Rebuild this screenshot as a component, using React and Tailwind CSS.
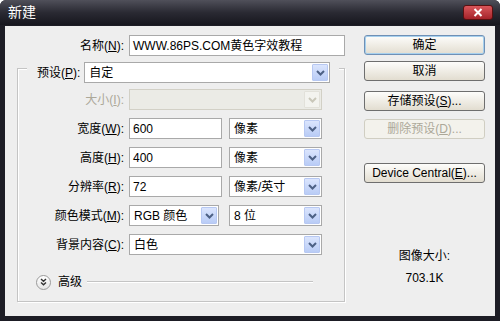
const FONT = { fontFamily: '"Liberation Sans", "Noto Sans CJK SC", sans-serif' }

function U({ children }) {
  return <span className="underline underline-offset-[1px]">{children}</span>
}

function Chevron({ disabled }) {
  return (
    <svg width="9" height="6" viewBox="0 0 9 6">
      <path
        d="M1 1 L4.5 4.5 L8 1"
        fill="none"
        stroke={disabled ? '#c9c7ba' : '#4d6185'}
        strokeWidth="2"
      />
    </svg>
  )
}

function Select({ className, value, disabled }) {
  return (
    <div
      className={`flex h-[21px] items-center border ${
        disabled ? 'border-[#d2d0c6] bg-[#ebebe6]' : 'border-[#a9a9a9] bg-white'
      } ${className}`}
    >
      <span className="flex-1 pl-[4px] text-[12px] leading-none">{value}</span>
      <div
        className={`mr-[1px] flex h-[17px] w-[16px] items-center justify-center rounded-[1px] border ${
          disabled
            ? 'border-[#e2e1da] bg-[#f3f3ef]'
            : 'border-[#b7c8f2] bg-gradient-to-b from-[#dbe5fd] to-[#b9ccf6]'
        }`}
      >
        <Chevron disabled={disabled} />
      </div>
    </div>
  )
}

function Input({ className, value }) {
  return (
    <div
      className={`flex h-[21px] items-center border border-[#a9a9a9] bg-white pl-[3px] text-[12px] ${className}`}
    >
      {value}
    </div>
  )
}

function Label({ className, children, disabled }) {
  return (
    <div
      className={`shrink-0 text-right text-[12px] ${
        disabled ? 'text-[#aca899]' : 'text-black'
      } ${className}`}
    >
      {children}
    </div>
  )
}

function Button({ children, primary, disabled, className }) {
  return (
    <div
      className={`flex h-[20px] w-[121px] items-center justify-center rounded-[3px] border text-[12px] ${
        disabled
          ? 'border-[#d0cec2] bg-[#f3f2ec] text-[#aca899]'
          : primary
          ? 'border-[#6f90b5] bg-gradient-to-b from-[#fdfdfb] to-[#e2ddd0] text-black shadow-[inset_0_0_0_1px_#a6d0ee]'
          : 'border-[#6e6e6e] bg-gradient-to-b from-[#fdfdfb] to-[#e2ddd0] text-black'
      } ${className}`}
    >
      {children}
    </div>
  )
}

function Row({ label, disabled, children }) {
  return (
    <div className="flex h-[21px] items-center">
      <Label className="w-[106px]" disabled={disabled}>
        {label}
      </Label>
      <div className="ml-[5px] flex items-center gap-[7px]">{children}</div>
    </div>
  )
}

export default function App() {
  return (
    <div
      className="flex h-[321px] w-[500px] flex-col overflow-hidden rounded-t-[6px] bg-[#1d1d25]"
      style={FONT}
    >
      {/* title bar */}
      <div className="flex h-[25px] shrink-0 items-center justify-between bg-gradient-to-b from-[#50505a] via-[#2a2a33] to-[#17171e] pl-[8px] pr-[7px]">
        <span className="text-[14px] text-white">新建</span>
        <div className="flex h-[15px] w-[30px] items-center justify-center rounded-[3px] border border-[#5a1010] bg-gradient-to-b from-[#d8555a] to-[#a5222a]">
          <svg width="10" height="9" viewBox="0 0 10 9">
            <path d="M1.5 1 L8.5 8 M8.5 1 L1.5 8" stroke="#fff" strokeWidth="2" />
          </svg>
        </div>
      </div>

      {/* body */}
      <div className="mx-[5px] mb-[5px] mt-[1px] flex flex-1 bg-[#eeeeee]">
        {/* left column */}
        <div className="flex w-[340px] shrink-0 flex-col">
          <div className="mt-[9px] flex h-[21px] items-center">
            <Label className="w-[119px]">
              名称(<U>N</U>):
            </Label>
            <Input className="ml-[5px] w-[217px]" value="WWW.86PS.COM黄色字效教程" />
          </div>

          {/* group box */}
          <div className="ml-[12px] mt-[12px] flex h-[234px] w-[328px] flex-col border border-[#c4c4c4] shadow-[inset_1px_1px_0_#ffffff,1px_1px_0_#ffffff]">
            <div className="-mt-[7px] ml-[9px] flex w-[312px] items-center bg-[#eeeeee] pl-[10px] pr-[4px]">
              <Label>
                预设(<U>P</U>):
              </Label>
              <Select className="ml-[4px] w-[246px]" value="自定" />
            </div>

            <div className="mt-[6px] flex flex-col gap-[8px]">
              <Row label={<>大小(<U>I</U>):</>} disabled>
                <Select className="w-[193px]" value="" disabled />
              </Row>
              <Row label={<>宽度(<U>W</U>):</>}>
                <Input className="w-[93px]" value="600" />
                <Select className="w-[93px]" value="像素" />
              </Row>
              <Row label={<>高度(<U>H</U>):</>}>
                <Input className="w-[93px]" value="400" />
                <Select className="w-[93px]" value="像素" />
              </Row>
              <Row label={<>分辨率(<U>R</U>):</>}>
                <Input className="w-[93px]" value="72" />
                <Select className="w-[93px]" value="像素/英寸" />
              </Row>
              <Row label={<>颜色模式(<U>M</U>):</>}>
                <Select className="w-[90px]" value="RGB 颜色" />
                <Select className="ml-[3px] w-[93px]" value="8 位" />
              </Row>
              <Row label={<>背景内容(<U>C</U>):</>}>
                <Select className="w-[193px]" value="白色" />
              </Row>
            </div>

            <div className="ml-[18px] mt-[18px] flex items-center">
              <div className="flex h-[15px] w-[15px] items-center justify-center rounded-full border border-[#9a9a9a] bg-gradient-to-b from-white to-[#e6e6e6]">
                <svg width="7" height="8" viewBox="0 0 7 8">
                  <path d="M1 1 L3.5 3.3 L6 1 M1 4.5 L3.5 6.8 L6 4.5" fill="none" stroke="#333" strokeWidth="1.4" />
                </svg>
              </div>
              <span className="ml-[7px] text-[12px]">高级</span>
              <div className="ml-[5px] h-[2px] w-[226px] border-y border-t-[#c4c4c4] border-b-white" />
            </div>
          </div>
        </div>

        {/* right column */}
        <div className="ml-[19px] flex flex-col items-center">
          <Button primary className="mt-[9px]">确定</Button>
          <Button className="mt-[6px]">取消</Button>
          <Button className="mt-[10px]">
            存储预设(<U>S</U>)...
          </Button>
          <Button disabled className="mt-[8px]">
            删除预设(<U>D</U>)...
          </Button>
          <Button className="mt-[24px]">
            Device Central(<U>E</U>)...
          </Button>
          <div className="mt-[65px] text-[12px] leading-[16px]">图像大小:</div>
          <div className="mt-[6px] text-[12px] leading-[16px]">703.1K</div>
        </div>
      </div>
    </div>
  )
}
